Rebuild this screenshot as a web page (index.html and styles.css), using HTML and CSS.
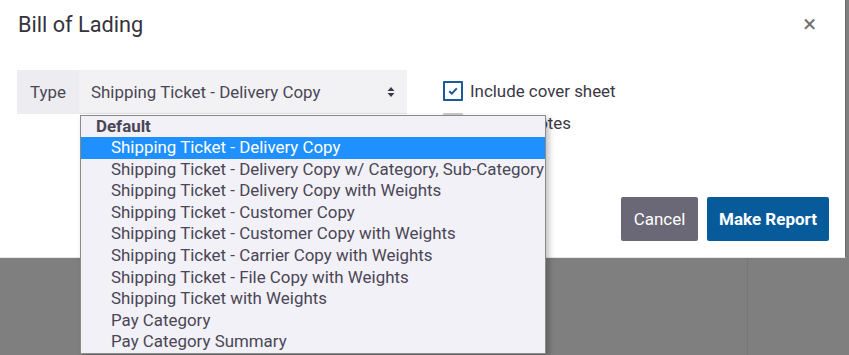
FILE: index.html
```html
<!DOCTYPE html>
<html lang="en">
<head>
  <meta charset="UTF-8">
  <meta name="viewport" content="width=device-width, initial-scale=1.0">
  <title>Bill of Lading</title>
  <link rel="stylesheet" href="styles.css">
</head>

<body>
  <div id="modal">
    <div class="modalHeader">
      <h1 class="modalTitle">Bill of Lading</h1>
      <span class="closeButton">&times;</span>
    </div>

    <div class="modalBody">
      <div class="inputGroup">
        <span class="groupLabel">Type</span>
        <div class="selectBox">
          <span>Shipping Ticket - Delivery Copy</span>
          <svg class="selectArrow" width="8" height="12" viewBox="0 0 8 12">
            <path d="M4 1 L7.5 5 L0.5 5 Z M4 11 L7.5 7 L0.5 7 Z" fill="#3d3a48"/>
          </svg>
        </div>
      </div>
      <div class="checkList">
        <label class="checkRow">
          <span class="checkBox checked">
            <svg width="10" height="8" viewBox="0 0 10 8">
              <path d="M1.2 4.2 L3.8 6.6 L8.8 1.4" fill="none" stroke="#1a5a96" stroke-width="2"/>
            </svg>
          </span>
          Include cover sheet
        </label>
        <label class="checkRow">
          <span class="checkBox"></span>
          Include notes
        </label>
      </div>
    </div>

    <div class="modalFooter">
      <button class="btn btnCancel">Cancel</button>
      <button class="btn btnPrimary">Make Report</button>
    </div>
  </div>

  <div id="typeDropdown">
    <div class="optGroup">Default</div>
    <div class="option selected">Shipping Ticket - Delivery Copy</div>
    <div class="option">Shipping Ticket - Delivery Copy w/ Category, Sub-Category</div>
    <div class="option">Shipping Ticket - Delivery Copy with Weights</div>
    <div class="option">Shipping Ticket - Customer Copy</div>
    <div class="option">Shipping Ticket - Customer Copy with Weights</div>
    <div class="option">Shipping Ticket - Carrier Copy with Weights</div>
    <div class="option">Shipping Ticket - File Copy with Weights</div>
    <div class="option">Shipping Ticket with Weights</div>
    <div class="option">Pay Category</div>
    <div class="option">Pay Category Summary</div>
  </div>
</body>
</html>
```

FILE: styles.css
```css
html, body {
  margin: 0;
  height: 355px;
  overflow: hidden;
}

body {
  position: relative;
  font-family: Roboto, "Liberation Sans", sans-serif;
  background: linear-gradient(to right, #7f7f7f 747px, #767676 747px, #767676 748px, #7f7f7f 748px);
  color: #3b3846;
}

#modal {
  width: 846px;
  height: 258px;
  box-sizing: border-box;
  background-color: #fff;
  border-right: 1px solid #6a6a6a;
  border-bottom: 1px solid #e6e6e6;
  display: flex;
  flex-direction: column;
}

.modalHeader {
  display: flex;
  justify-content: space-between;
  align-items: center;
  padding: 10px 29px 0 18px;
  height: 28px;
}

.modalTitle {
  margin: 0;
  font-size: 21.7px;
  font-weight: 400;
  color: #35323e;
}

.closeButton {
  font-size: 24px;
  color: #6f6f6f;
  line-height: 22px;
}

.modalBody {
  display: flex;
  padding: 32px 0 0 17px;
}

.inputGroup {
  display: flex;
  width: 390px;
  height: 44px;
  font-size: 16.9px;
}

.groupLabel {
  width: 62px;
  box-sizing: border-box;
  padding-left: 13px;
  display: flex;
  align-items: center;
  background-color: #ececf1;
  color: #4a4656;
}

.selectBox {
  flex: 1;
  display: flex;
  align-items: center;
  justify-content: space-between;
  padding: 0 12px 0 12px;
  background-color: #f2f2f5;
  border-bottom: 1px solid #e4e4ea;
  color: #4a4656;
}

.checkList {
  display: flex;
  flex-direction: column;
  gap: 12px;
  margin-left: 36px;
  padding-top: 11px;
}

.checkRow {
  display: flex;
  align-items: center;
  gap: 7px;
  font-size: 16.9px;
  color: #3b3846;
}

.checkBox {
  width: 20px;
  height: 20px;
  box-sizing: border-box;
  border: 2px solid #c9c9d0;
  border-radius: 1px;
  display: flex;
  align-items: center;
  justify-content: center;
}

.checkBox.checked {
  border-color: #1a5a96;
}

.modalFooter {
  display: flex;
  justify-content: flex-end;
  gap: 9px;
  padding: 0 16px 0 0;
  margin-top: 64px;
}

.btn {
  height: 44px;
  border: none;
  border-radius: 2px;
  font-family: Roboto, "Liberation Sans", sans-serif;
  font-size: 17px;
  color: #fff;
  padding: 0;
}

.btnCancel {
  width: 77px;
  background-color: #6a6776;
}

.btnPrimary {
  width: 122px;
  background-color: #085b9b;
  font-weight: 700;
}

#typeDropdown {
  position: absolute;
  left: 80px;
  top: 115px;
  width: 466px;
  height: 239px;
  box-sizing: border-box;
  background-color: #f2f1f7;
  border: 1px solid #8a8a8a;
  box-shadow: 3px 3px 6px rgba(0, 0, 0, 0.25);
  font-size: 16.9px;
  line-height: 21.6px;
  color: #4a4656;
}

.optGroup {
  font-weight: 700;
  padding-left: 15px;
  height: 21px;
  line-height: 21px;
}

.option {
  padding-left: 30px;
  white-space: nowrap;
}

.option.selected {
  background-color: #1e90ff;
  color: #fff;
}
```
